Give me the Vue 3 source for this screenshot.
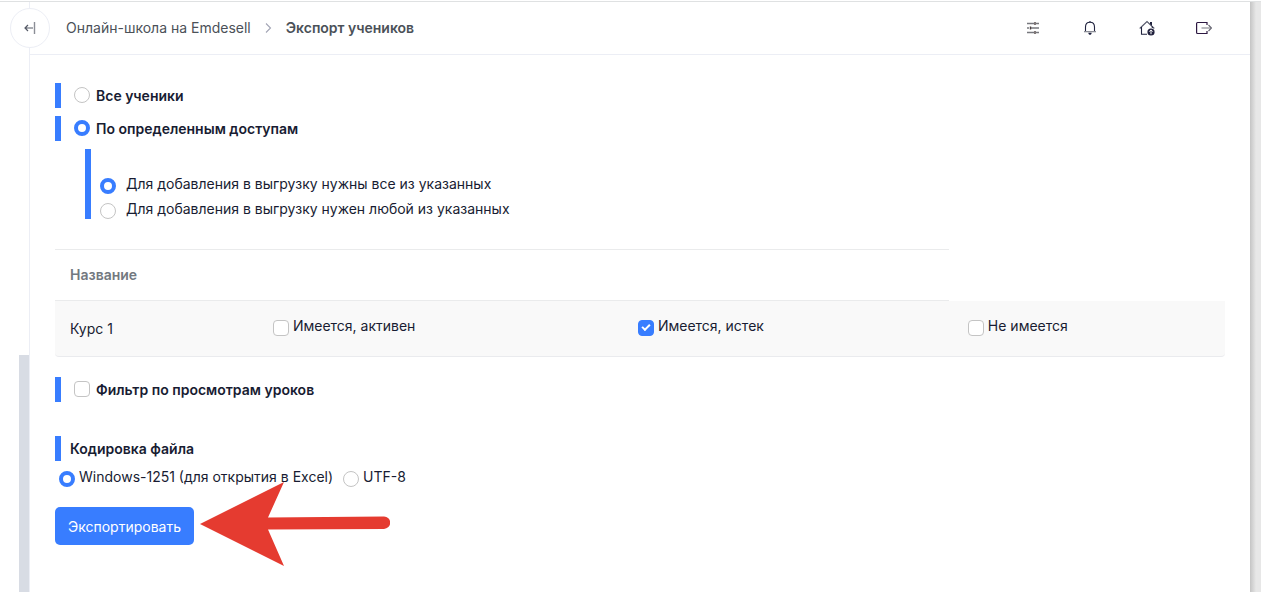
<script setup>
import { ref } from 'vue'

const scope = ref('access')
const match = ref('all')
const encoding = ref('win')
const hasActive = ref(false)
const hasExpired = ref(true)
const hasNone = ref(false)
const lessonFilter = ref(false)
</script>

<template>
  <div class="window">
    <aside class="rail">
      <div class="rail-thumb"></div>
      <button class="collapse" type="button" aria-label="Свернуть меню">
        <svg width="12" height="14" viewBox="0 0 12 14" fill="none">
          <path d="M1 7h8M4 4L1 7l3 3" stroke="#555a66" stroke-width="1.2" />
          <path d="M10.5 1v12" stroke="#8b8e96" stroke-width="1.4" />
        </svg>
      </button>
    </aside>

    <div class="page">
      <header class="topbar">
        <nav class="crumbs">
          <a href="#">Онлайн-школа на Emdesell</a>
          <svg width="7" height="10" viewBox="0 0 7 10" fill="none">
            <path d="M1 0.5L5.5 5L1 9.5" stroke="#a3a5b5" stroke-width="1.1" />
          </svg>
          <strong>Экспорт учеников</strong>
        </nav>
        <div class="tools">
          <button type="button" aria-label="Настройки">
            <svg width="16" height="16" viewBox="0 0 16 16" fill="none" stroke="#77787e" stroke-width="1.4">
              <path d="M2 3.500h7M11 3.500h3M2 8h2M6 8h8M2 12.500h7M11 12.500h3" />
              <path d="M10 2v3M5.500 6.500v3M10 11v3" stroke="#4b4040" />
            </svg>
          </button>
          <button type="button" aria-label="Уведомления">
            <svg width="16" height="16" viewBox="0 0 16 16" fill="none" stroke="#20233f" stroke-width="1.1">
              <path d="M3.500 11V7C3.500 4 5.500 2.200 8 2.200S12.500 4 12.500 7v4" />
              <path d="M2 11.700h12" stroke="#777983" />
              <path d="M8 1v1.500" />
              <path d="M6.300 12.800h3.400C9.500 14.300 8.900 14.800 8 14.800s-1.500-.5-1.700-2z" fill="#20233f" stroke="none" />
            </svg>
          </button>
          <button type="button" aria-label="На главную">
            <svg width="16" height="16" viewBox="0 0 16 16" fill="none" stroke="#20233f" stroke-width="1.1">
              <path d="M0.700 8.500L8 1.500l7.300 7" stroke="#55586a" />
              <path d="M2.500 7v7.200h5.500M13.300 6.500V8" />
              <path d="M11 2h2v4l-2-2z" fill="#20233f" stroke="none" />
              <circle cx="12" cy="12" r="3.600" fill="#20203c" stroke="none" />
              <path d="M12 14.200v-4M10.300 11.600L12 9.900l1.700 1.700" stroke="#fff" stroke-width="1" />
            </svg>
          </button>
          <button type="button" aria-label="Выход">
            <svg width="16" height="16" viewBox="0 0 16 16" fill="none" stroke="#2d1842" stroke-width="1.2">
              <path d="M11 5V2.500H1.500Q0.600 2.500 0.600 3.400V12.600Q0.600 13.500 1.500 13.500H11V11" />
              <path d="M5.500 8h9.500" stroke="#8e8e96" />
              <path d="M12.500 5L15.500 8l-3 3" stroke="#666672" />
            </svg>
          </button>
        </div>
      </header>

      <main class="content">
        <form @submit.prevent>
          <div class="section">
            <label class="option"><input v-model="scope" type="radio" name="scope" value="every" /><span>Все ученики</span></label>
          </div>
          <div class="section">
            <label class="option"><input v-model="scope" type="radio" name="scope" value="access" /><span>По определенным доступам</span></label>
          </div>
          <div class="nested">
            <label class="field"><input v-model="match" type="radio" name="match" value="all" /><span>Для добавления в выгрузку нужны все из указанных</span></label>
            <label class="field"><input v-model="match" type="radio" name="match" value="any" /><span>Для добавления в выгрузку нужен любой из указанных</span></label>
          </div>

          <table>
            <colgroup>
              <col class="c-name" />
              <col class="c-active" />
              <col class="c-expired" />
              <col />
            </colgroup>
            <thead>
              <tr>
                <th scope="col" colspan="3">Название</th>
              </tr>
            </thead>
            <tbody>
              <tr>
                <td class="name">Курс 1</td>
                <td><label class="field"><input v-model="hasActive" type="checkbox" /><span>Имеется, активен</span></label></td>
                <td><label class="field"><input v-model="hasExpired" type="checkbox" /><span>Имеется, истек</span></label></td>
                <td><label class="field"><input v-model="hasNone" type="checkbox" /><span>Не имеется</span></label></td>
              </tr>
            </tbody>
          </table>

          <div class="section filter">
            <label class="option"><input v-model="lessonFilter" type="checkbox" /><span>Фильтр по просмотрам уроков</span></label>
          </div>

          <div class="section encoding-title" id="encoding-title">Кодировка файла</div>
          <div class="encodings" role="radiogroup" aria-labelledby="encoding-title">
            <label class="field"><input v-model="encoding" type="radio" name="encoding" value="win" /><span>Windows-1251 (для открытия в Excel)</span></label>
            <label class="field"><input v-model="encoding" type="radio" name="encoding" value="utf" /><span>UTF-8</span></label>
          </div>

          <div class="actions">
            <button class="export" type="submit">Экспортировать</button>
            <svg class="pointer" width="190" height="84" viewBox="0 0 190 84">
              <path d="M0 42L84 0L68 35.500L184 34.500a6.200 6.200 0 0 1 0 12.400L68 47.500L84 84Z" fill="#e53b30" />
            </svg>
          </div>
        </form>
      </main>
    </div>
    <div class="edge"></div>
  </div>
</template>

<style>
body {
  background: #fff;
}
</style>

<style scoped>
* {
  box-sizing: border-box;
}

.window {
  display: flex;
  min-height: 100vh;
  border-top: 1px solid #fff;
  background: #fff;
  box-shadow: inset 0 1px 0 #dfe1e2;
  color: #181c32;
  font: 400 14px/21px Inter, "Noto Sans", sans-serif;
}

.rail {
  position: relative;
  display: flex;
  flex: 0 0 30px;
  flex-direction: column;
  align-items: flex-end;
  justify-content: flex-end;
  margin-top: 1px;
  border-right: 1px solid #eceef5;
}

.rail-thumb {
  width: 10px;
  height: 40vh;
  background: #d8dce4;
}

.collapse {
  position: absolute;
  top: 6px;
  right: -21px;
  display: flex;
  align-items: center;
  justify-content: center;
  width: 40px;
  height: 40px;
  padding: 0;
  border: 1px solid #eceef5;
  border-radius: 50%;
  background: #fff;
}

.page {
  flex: 1;
  min-width: 0;
}

.topbar {
  display: flex;
  align-items: center;
  justify-content: space-between;
  height: 54px;
  padding: 0 38px 0 36px;
  border-bottom: 1px solid #eceef5;
}

.crumbs {
  display: flex;
  align-items: center;
  gap: 14px;
  color: #4b5158;
}

.crumbs a {
  color: inherit;
  text-decoration: none;
}

.crumbs strong {
  font-weight: 600;
}

.tools {
  display: flex;
  gap: 41px;
}

.tools button {
  display: flex;
  padding: 0;
  border: 0;
  background: none;
}

.content {
  padding: 28px 25px;
}

.section {
  display: flex;
  align-items: center;
  height: 25px;
  margin-bottom: 8px;
  padding-left: 9px;
  border-left: 6px solid #387dff;
  font-weight: 600;
}

.option {
  display: flex;
  align-items: center;
  gap: 6px;
  padding-left: 4px;
}

.option input {
  margin-bottom: 1px;
}

input {
  flex: none;
  width: 16px;
  height: 16px;
  margin: 0;
  border: 1px solid #c4c4c4;
  background: #fff;
  appearance: none;
}

input[type="radio"] {
  border-radius: 50%;
}

input[type="radio"]:checked {
  border: 4px solid #387dff;
}

input[type="checkbox"] {
  border-radius: 4px;
}

input[type="checkbox"]:checked {
  position: relative;
  border-color: #387dff;
  background: #387dff;
}

input[type="checkbox"]:checked::after {
  content: "";
  position: absolute;
  top: 3px;
  left: 3px;
  box-sizing: border-box;
  width: 8px;
  height: 5px;
  border-bottom: 2px solid #fff;
  border-left: 2px solid #fff;
  transform: rotate(-45deg);
}

.field {
  display: flex;
  align-items: flex-end;
  gap: 4px;
}

.nested {
  display: flex;
  flex-direction: column;
  gap: 4px;
  margin-left: 30px;
  padding: 24px 0 0 9px;
  border-left: 6px solid #387dff;
}

.nested .field {
  gap: 10px;
}

table {
  width: 100%;
  margin: 30px 0 20px;
  border-collapse: separate;
  border-spacing: 0;
  table-layout: fixed;
}

.c-name {
  width: 17%;
}

.c-active {
  width: 31.2%;
}

.c-expired {
  width: 28.2%;
}

th {
  height: 52px;
  padding: 0 15px 2px;
  border: solid #eaebec;
  border-width: 1px 0;
  color: #727880;
  font-weight: 600;
  text-align: left;
}

td {
  height: 56px;
  padding: 0 19px 6px;
  border-bottom: 1px solid #eaebee;
  background: #f9f9f9;
}

td.name {
  padding: 0 15px;
}

td:first-child {
  border-bottom-left-radius: 4px;
}

td:last-child {
  border-bottom-right-radius: 4px;
}

.filter {
  margin-bottom: 34px;
}

.encodings {
  display: flex;
  gap: 10px;
  padding: 0 4px;
}

.encoding-title {
  margin-bottom: 5px;
}

.actions {
  display: flex;
  align-items: center;
  height: 38px;
  margin-top: 20px;
}

.export {
  height: 38px;
  padding: 0 13px;
  border: 0;
  border-radius: 5px;
  background: #387dff;
  color: #fff;
  font: 400 14px/21px Inter, "Noto Sans", sans-serif;
}

.pointer {
  flex: none;
  margin: 0 0 4px 6px;
}

.edge {
  flex: 0 0 11px;
  margin-top: 1px;
  background: linear-gradient(90deg, #c4c4c4, #e7e7e7 6px);
}
</style>
